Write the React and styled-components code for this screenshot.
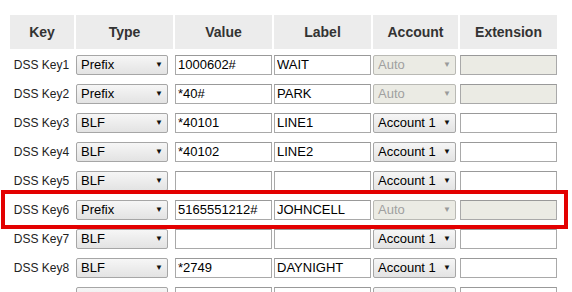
import React from "react";
import styled, { createGlobalStyle } from "styled-components";

const Global = createGlobalStyle`
  html, body { margin: 0; padding: 0; background: #fff; }
  body { font-family: "Liberation Sans", Arial, sans-serif; }
`;

const Page = styled.div`
  position: relative;
  padding: 15px 0 0 10px;
  width: 572px;
  height: 292px;
  box-sizing: border-box;
  overflow: hidden;
`;

const Grid = styled.div`
  display: grid;
  grid-template-columns: 64px 97px 97px 97px 85px 97px;
  column-gap: 2px;
  grid-auto-rows: 29px;
  grid-template-rows: 35px;
  align-items: center;
  row-gap: 0;
`;

const HeadCell = styled.div`
  align-self: start;
  height: 34px;
  background: #ececec;
  color: #333;
  font-weight: bold;
  font-size: 14px;
  display: flex;
  align-items: center;
  justify-content: center;
`;

const KeyCell = styled.div`
  font-size: 12px;
  color: #222;
  text-align: center;
  padding-right: 1px;
`;

const Cell = styled.div`
  display: flex;
  align-items: center;
`;

const SelectBox = styled.div`
  box-sizing: border-box;
  width: ${(p) => p.$w}px;
  height: 20px;
  display: flex;
  align-items: center;
  justify-content: space-between;
  padding: 0 4px 0 4px;
  border: 1px solid ${(p) => (p.$disabled ? "#b9b9b4" : "#a6a6a6")};
  border-radius: 2px;
  background: ${(p) =>
    p.$disabled ? "#ebebe4" : "linear-gradient(#f6f6f6, #e3e3e3)"};
  color: ${(p) => (p.$disabled ? "#a0a0a0" : "#000")};
  font-size: 13px;
`;

const Arrow = styled.span`
  font-size: 8px;
  color: ${(p) => (p.$disabled ? "#9a9a9a" : "#111")};
  line-height: 1;
`;

const TextBox = styled.input`
  box-sizing: border-box;
  width: ${(p) => p.$w}px;
  height: 20px;
  margin: 0;
  padding: 0 2px;
  border: 1px solid #a9a9a9;
  border-top-color: #999;
  background: ${(p) => (p.$disabled ? "#ebebe4" : "#fff")};
  font-family: "Liberation Sans", Arial, sans-serif;
  font-size: 13px;
  color: #000;
  outline: none;
`;

const Highlight = styled.div`
  position: absolute;
  left: 1px;
  top: 190px;
  width: 567px;
  height: 39px;
  box-sizing: border-box;
  border: 4px solid #e30000;
  pointer-events: none;
`;

const rows = [
  { n: 1, type: "Prefix", value: "1000602#", label: "WAIT", auto: true },
  { n: 2, type: "Prefix", value: "*40#", label: "PARK", auto: true },
  { n: 3, type: "BLF", value: "*40101", label: "LINE1" },
  { n: 4, type: "BLF", value: "*40102", label: "LINE2" },
  { n: 5, type: "BLF", value: "", label: "" },
  { n: 6, type: "Prefix", value: "5165551212#", label: "JOHNCELL", auto: true },
  { n: 7, type: "BLF", value: "", label: "" },
  { n: 8, type: "BLF", value: "*2749", label: "DAYNIGHT" },
  { n: 9, type: "BLF", value: "", label: "" },
];

const headers = ["Key", "Type", "Value", "Label", "Account", "Extension"];

export default function App() {
  return (
    <Page>
      <Global />
      <Grid>
        {headers.map((h) => (
          <HeadCell key={h}>{h}</HeadCell>
        ))}
        {rows.map((r) => (
          <React.Fragment key={r.n}>
            <KeyCell>DSS Key{r.n}</KeyCell>
            <Cell>
              <SelectBox $w={92}>
                <span>{r.type}</span>
                <Arrow>▼</Arrow>
              </SelectBox>
            </Cell>
            <Cell>
              <TextBox $w={97} readOnly value={r.value} />
            </Cell>
            <Cell>
              <TextBox $w={97} readOnly value={r.label} />
            </Cell>
            <Cell>
              <SelectBox $w={83} $disabled={r.auto}>
                <span>{r.auto ? "Auto" : "Account 1"}</span>
                <Arrow $disabled={r.auto}>▼</Arrow>
              </SelectBox>
            </Cell>
            <Cell>
              <TextBox $w={97} readOnly $disabled={r.auto} value="" />
            </Cell>
          </React.Fragment>
        ))}
      </Grid>
      <Highlight />
    </Page>
  );
}
